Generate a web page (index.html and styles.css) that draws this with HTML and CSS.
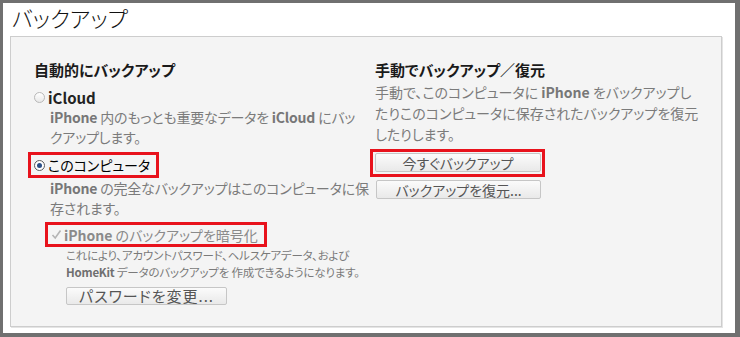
FILE: index.html
```html
<!DOCTYPE html>
<html lang="ja">
<head>
    <meta charset="UTF-8">
    <title>バックアップ</title>
    <link rel="stylesheet" href="styles.css">
</head>
<body>

<div class="frame">
    <h1 class="title">バックアップ</h1>

    <div class="panel">
        <!-- 自動バックアップ -->
        <div class="col">
            <h2 class="col-head">自動的にバックアップ</h2>

            <div class="radio-row">
                <span class="radio"></span>
                <span class="radio-label">iCloud</span>
            </div>
            <div class="desc">
                <b>iPhone</b> 内のもっとも重要なデータを <b>iCloud</b> にバッ<br>クアップします。
            </div>

            <div class="radio-row mark">
                <span class="radio on"></span>
                <span class="radio-label plain">このコンピュータ</span>
            </div>
            <div class="desc">
                <b>iPhone</b> の完全なバックアップはこのコンピュータに保<br>存されます。
            </div>

            <div class="check-row mark">
                <svg class="check" width="11" height="11" viewBox="0 0 11 11">
                    <path d="M1.5 6 L4.2 9 L9.5 1.5" fill="none" stroke="#b4b4b4" stroke-width="1.6"/>
                </svg>
                <span class="check-label"><b>iPhone</b> のバックアップを暗号化</span>
            </div>
            <div class="note">
                これにより、アカウントパスワード、ヘルスケアデータ、および<br><b>HomeKit</b> データのバックアップを 作成できるようになります。
            </div>
            <button class="btn btn-pass">パスワードを変更...</button>
        </div>

        <!-- 手動バックアップ -->
        <div class="col">
            <h2 class="col-head">手動でバックアップ／復元</h2>
            <div class="desc desc-right">
                手動で、このコンピュータに <b>iPhone</b> をバックアップし<br>たりこのコンピュータに保存されたバックアップを復元<br>したりします。
            </div>
            <div class="btn-mark">
                <button class="btn btn-wide">今すぐバックアップ</button>
            </div>
            <button class="btn btn-wide btn-restore">バックアップを復元...</button>
        </div>
    </div>
</div>

</body>
</html>
```

FILE: styles.css
```css
body {
    margin: 0;
    background-color: #707070;
    font-family: "Noto Sans CJK JP", "Noto Sans", sans-serif;
    font-feature-settings: "palt";
}
.frame {
    margin: 3px 5px 4px 3px;
    height: 330px;
    background-color: #fff;
    display: flex;
    flex-direction: column;
    box-sizing: border-box;
    padding: 0 13px 6px 7px;
}
.title {
    margin: 0 0 5px 2px;
    font-size: 22px;
    line-height: 28px;
    font-weight: 300;
    color: #111;
}
.panel {
    flex: 1;
    background-color: #f4f4f4;
    border: 1px solid #cdcdcd;
    box-shadow: 1px 1px 0 #e4e4e4;
    display: grid;
    grid-template-columns: 341px 1fr;
    padding: 23px 0 0 23px;
}
.col {
    display: flex;
    flex-direction: column;
    align-items: flex-start;
    white-space: nowrap;
}
.col-head {
    margin: 0;
    font-size: 15px;
    line-height: 20px;
    font-weight: 700;
    color: #1a1a1a;
}
.radio-row {
    display: flex;
    align-items: center;
    gap: 3px;
    height: 20px;
    margin-top: 7px;
}
.radio {
    width: 9px;
    height: 9px;
    border: 1px solid #b8b8b8;
    border-radius: 50%;
    background: linear-gradient(#fff, #e8e8e8);
    position: relative;
}
.radio.on {
    border-color: #5a5a5a;
    background: #fff;
}
.radio.on::after {
    content: "";
    position: absolute;
    left: 2px;
    top: 2px;
    width: 5px;
    height: 5px;
    border-radius: 50%;
    background-color: #2b4f86;
}
.radio-label {
    font-size: 15px;
    font-weight: 700;
    color: #222;
}
.radio-label.plain {
    font-size: 14px;
    font-weight: 400;
    color: #000;
}
.mark {
    border: 3px solid #e8121c;
    margin-left: -6px;
    padding: 0 6px 0 3px;
}
.radio-row.mark {
    margin-top: 5px;
}
.desc {
    margin-left: 16px;
    font-size: 14px;
    line-height: 20px;
    color: #7b7b7b;
    letter-spacing: -0.2px;
}
.desc b {
    font-weight: 700;
    color: #777;
}
.desc-right {
    margin-left: 0;
    margin-top: 2px;
    line-height: 21px;
    letter-spacing: 0;
}
.check-row {
    display: flex;
    align-items: center;
    gap: 2px;
    height: 19px;
    margin-top: 4px;
    margin-left: 11px;
    padding: 0 6px 0 3px;
}
.check-label {
    font-size: 14px;
    color: #8a8a8a;
}
.check-label b {
    font-weight: 700;
}
.note {
    margin-left: 32px;
    font-size: 11.5px;
    line-height: 17px;
    letter-spacing: -0.2px;
    color: #7a7a7a;
}
.note b {
    font-weight: 700;
    color: #6f6f6f;
}
.btn {
    font-family: inherit;
    font-feature-settings: "palt";
    background: linear-gradient(#fbfbfb, #e9e9e9);
    border: 1px solid #c6c6c6;
    border-radius: 2px;
    color: #555;
    padding: 0;
    font-size: 14px;
    line-height: 16px;
    height: 19px;
}
.btn-pass {
    margin: 6px 0 0 32px;
    width: 161px;
    height: 18px;
    font-size: 15px;
    letter-spacing: 1px;
}
.btn-mark {
    border: 3px solid #e8121c;
    margin: 4px 0 0 -5px;
    padding: 1px 1px 2px 2px;
    display: flex;
}
.btn-wide {
    width: 166px;
}
.btn-restore {
    margin: 3px 0 0 1px;
    width: 165px;
}
```
